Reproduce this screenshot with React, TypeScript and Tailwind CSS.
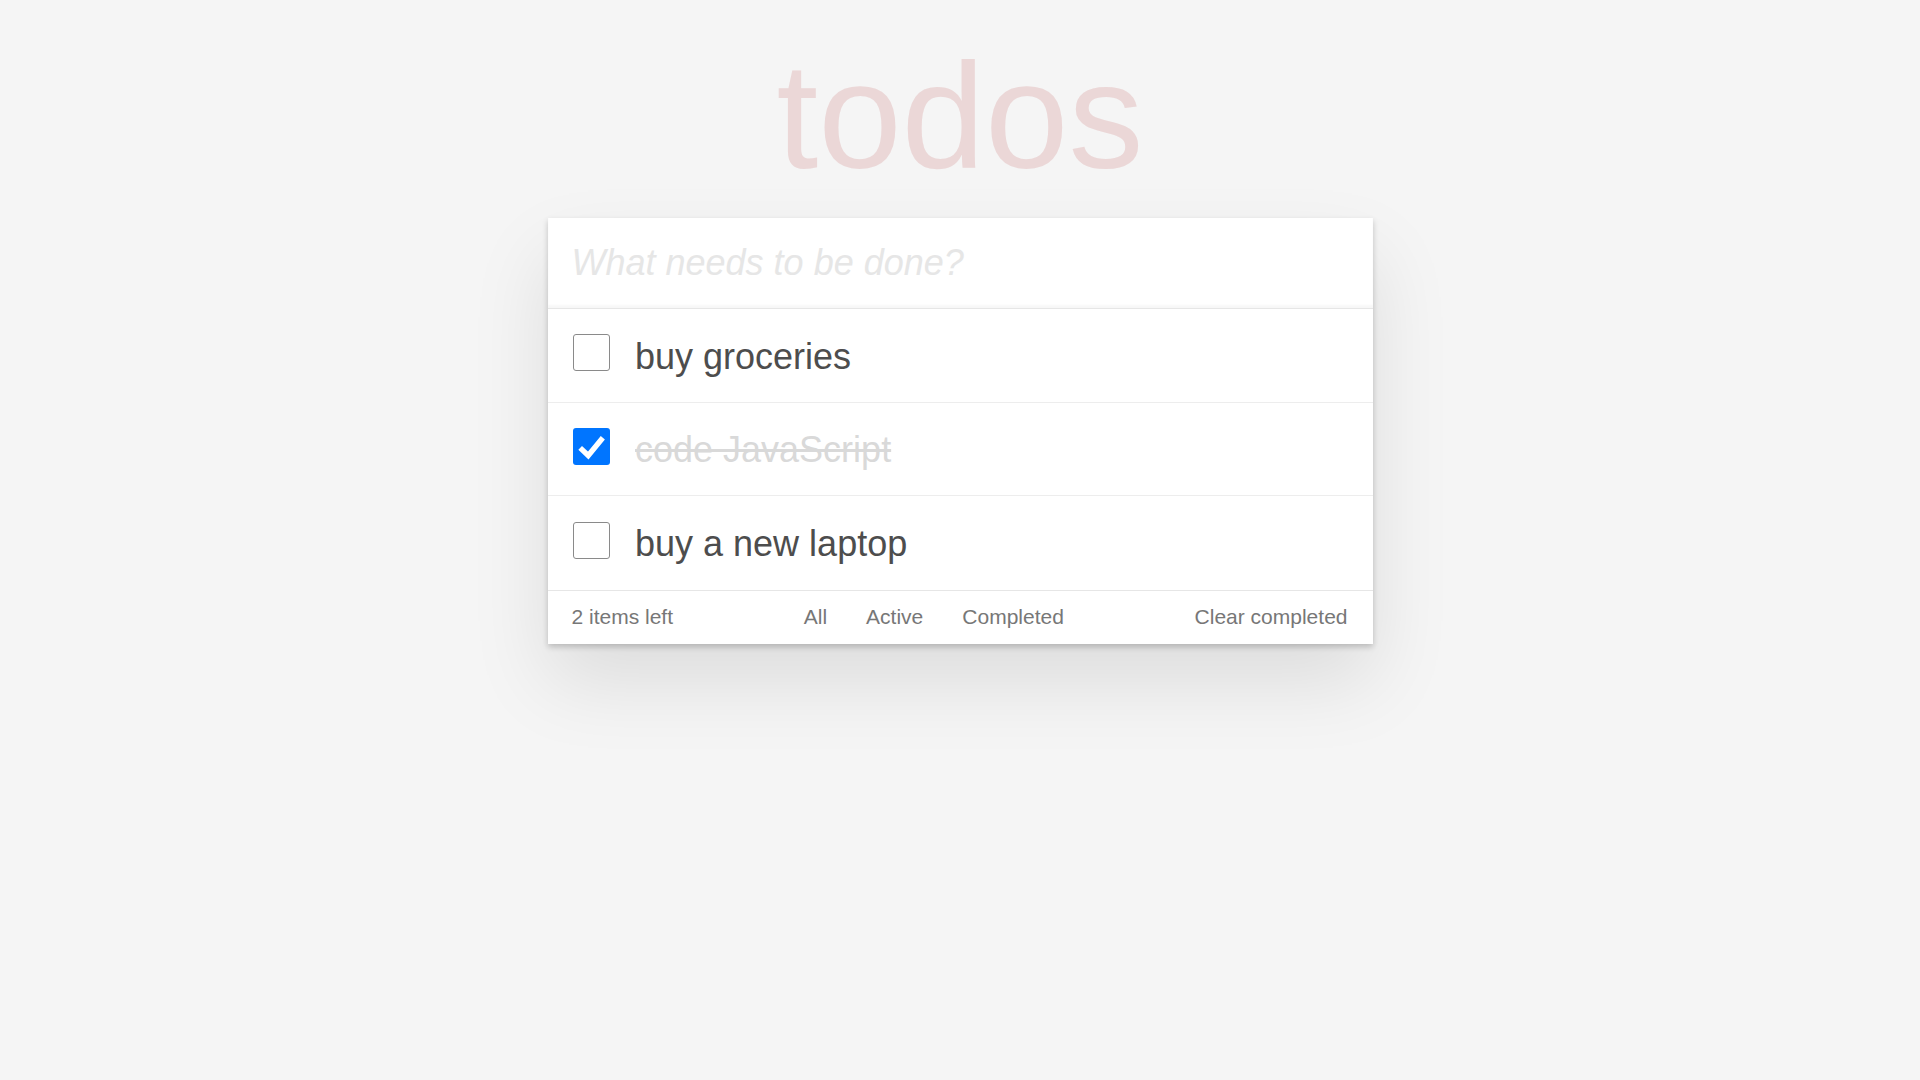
import React from "react";

type Todo = { text: string; done: boolean };

const todos: Todo[] = [
  { text: "buy groceries", done: false },
  { text: "code JavaScript", done: true },
  { text: "buy a new laptop", done: false },
];

function Check({ done }: { done: boolean }) {
  if (done) {
    return (
      <div className="mb-[5px] flex h-[37px] w-[37px] shrink-0 items-center justify-center rounded-[3px] bg-[#0075ff]">
        <svg viewBox="0 0 16 16" className="h-[37px] w-[37px]">
          <polyline
            points="3.1,8.6 6.6,11.9 12.9,4.2"
            fill="none"
            stroke="#ffffff"
            strokeWidth="2.3"
            strokeLinecap="butt"
            strokeLinejoin="miter"
          />
        </svg>
      </div>
    );
  }
  return (
    <div className="mb-[5px] h-[37px] w-[37px] shrink-0 rounded-[3px] border-[1.5px] border-[#8a8a8a] bg-white" />
  );
}

export default function App() {
  const left = todos.filter((t) => !t.done).length;
  return (
    <div
      className="min-h-[1080px] w-full bg-[#f5f5f5] text-[#4d4d4d]"
      style={{ fontFamily: '"Liberation Sans", Arial, Helvetica, sans-serif' }}
    >
      <h1 className="pt-[41px] text-center text-[150px] leading-[150px] font-normal text-[#ebd7d7]">
        todos
      </h1>
      <div className="relative mx-auto mt-[27px] w-[825px] bg-white shadow-[0_3px_6px_0_rgba(0,0,0,0.2),0_37.5px_75px_0_rgba(0,0,0,0.1)]">
        <input
          className="block h-[90px] w-full bg-transparent pr-[24px] pb-[1px] pl-[24px] text-[36px] text-[#4d4d4d] outline-none shadow-[inset_0_-3px_2px_rgba(0,0,0,0.03)] placeholder:italic placeholder:text-[#e6e6e6]"
          placeholder="What needs to be done?"
          style={{ fontFamily: '"Liberation Sans", Arial, Helvetica, sans-serif' }}
        />
        <ul className="border-t border-[#e6e6e6]">
          {todos.map((t, i) => (
            <li
              key={t.text}
              className={
                "flex h-[93.5px] items-center gap-[25px] pl-[25.5px] " +
                (i < todos.length - 1 ? "border-b border-[#ededed]" : "")
              }
            >
              <Check done={t.done} />
              <span
                className={
                  "pt-[2px] text-[36px] leading-[43.2px] " +
                  (t.done ? "text-[#d9d9d9] line-through" : "text-[#4d4d4d]")
                }
              >
                {t.text}
              </span>
            </li>
          ))}
        </ul>
        <div className="flex h-[54px] items-center justify-between border-t border-[#e6e6e6] pr-[25px] pl-[24px] text-[21px] text-[#777777]">
          <span>{left} items left</span>
          <div className="flex gap-[39px] px-[16.5px]">
            <span>All</span>
            <span>Active</span>
            <span>Completed</span>
          </div>
          <span>Clear completed</span>
        </div>
      </div>
    </div>
  );
}
